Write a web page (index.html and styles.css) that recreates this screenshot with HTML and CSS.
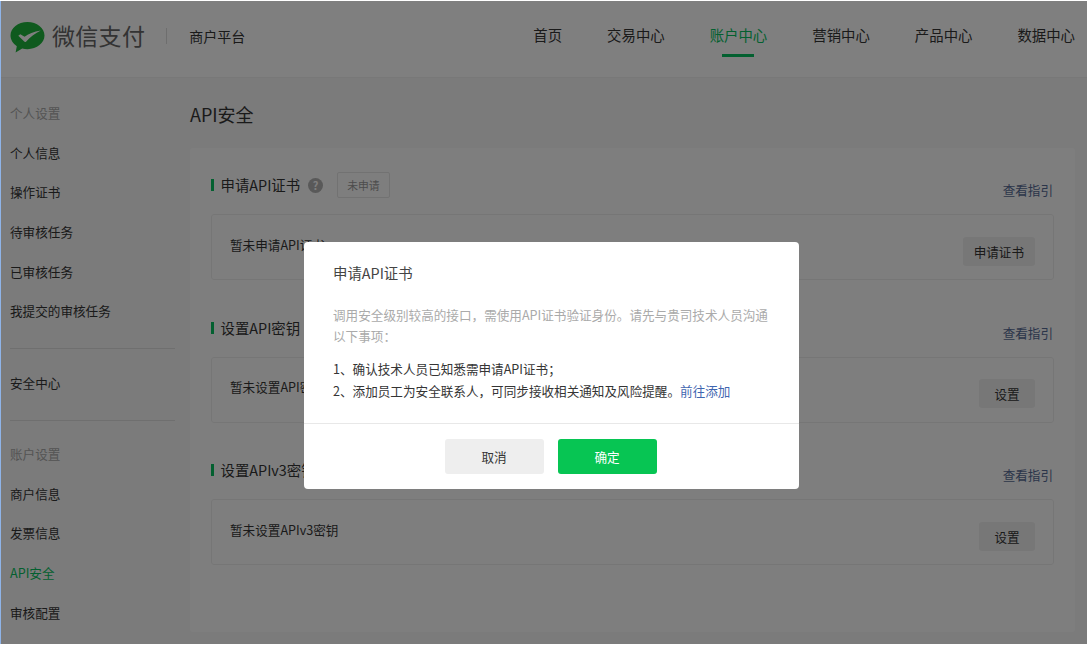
FILE: index.html
```html
<!DOCTYPE html>
<html lang="zh-CN">
<head>
  <meta charset="UTF-8" />
  <title>API安全 - 微信支付商户平台</title>
  <link rel="stylesheet" href="styles.css">
</head>
<body>
  <div class="frame">
    <div class="header">
      <div class="logo">
        <svg class="logo-icon" width="35" height="31" viewBox="0 0 35 31">
          <path fill="#1fb53c" d="M17.5 0C8 0 .5 6 .5 13.6c0 4.3 2.5 8.1 6.3 10.6L5.6 30.6l6.6-4c1.700.4 3.400.6 5.300.6 9.400 0 17-6.100 17-13.600S26.900 0 17.500 0z"/>
          <path fill="#fff" d="M8.300 13.800l2-1.600 4.300 2.500c3.600-2.900 9.300-5.300 16.200-6.300-5.400 2.700-10.400 6.300-14.800 11.300-.5.300-1 .3-1.500.1z"/>
        </svg>
        <span class="logo-text">微信支付</span>
        <span class="logo-line"></span>
        <span class="logo-sub">商户平台</span>
      </div>
      <div class="nav">
        <a class="nav-item">首页</a>
        <a class="nav-item">交易中心</a>
        <a class="nav-item active">账户中心</a>
        <a class="nav-item">营销中心</a>
        <a class="nav-item">产品中心</a>
        <a class="nav-item">数据中心</a>
      </div>
    </div>

    <div class="body">
      <div class="sidebar">
        <div class="side-group">
          <div class="side-label">个人设置</div>
          <a class="side-item">个人信息</a>
          <a class="side-item">操作证书</a>
          <a class="side-item">待审核任务</a>
          <a class="side-item">已审核任务</a>
          <a class="side-item">我提交的审核任务</a>
        </div>
        <div class="side-group">
          <a class="side-item">安全中心</a>
        </div>
        <div class="side-group">
          <div class="side-label">账户设置</div>
          <a class="side-item">商户信息</a>
          <a class="side-item">发票信息</a>
          <a class="side-item active">API安全</a>
          <a class="side-item">审核配置</a>
        </div>
      </div>

      <div class="main">
        <h1 class="page-title">API安全</h1>
        <div class="card">
          <div class="section">
            <div class="section-head">
              <h2 class="section-title">申请API证书</h2>
              <span class="help">?</span>
              <span class="tag">未申请</span>
              <a class="guide">查看指引</a>
            </div>
            <div class="box">
              <span class="box-text">暂未申请API证书</span>
              <button class="btn">申请证书</button>
            </div>
          </div>
          <div class="section">
            <div class="section-head">
              <h2 class="section-title">设置API密钥</h2>
              <a class="guide">查看指引</a>
            </div>
            <div class="box">
              <span class="box-text">暂未设置API密钥</span>
              <button class="btn">设置</button>
            </div>
          </div>
          <div class="section">
            <div class="section-head">
              <h2 class="section-title">设置APIv3密钥</h2>
              <a class="guide">查看指引</a>
            </div>
            <div class="box">
              <span class="box-text">暂未设置APIv3密钥</span>
              <button class="btn">设置</button>
            </div>
          </div>
        </div>
      </div>
    </div>

    <div class="mask"></div>

    <div class="dialog">
      <div class="dialog-body">
        <h3 class="dialog-title">申请API证书</h3>
        <p class="dialog-desc">调用安全级别较高的接口，需使用API证书验证身份。请先与贵司技术人员沟通以下事项：</p>
        <p class="dialog-list">1、确认技术人员已知悉需申请API证书；<br>2、添加员工为安全联系人，可同步接收相关通知及风险提醒。<a class="link">前往添加</a></p>
      </div>
      <div class="dialog-foot">
        <button class="dialog-btn">取消</button>
        <button class="dialog-btn primary">确定</button>
      </div>
    </div>
  </div>
</body>
</html>
```

FILE: styles.css
```css
* {
  box-sizing: border-box;
  margin: 0;
  padding: 0;
}

html, body {
  height: 100%;
  overflow: hidden;
}

body {
  background: #fff;
  padding: 1px 0 1px 0;
  font-family: "Noto Sans CJK SC", "Liberation Sans", sans-serif;
  font-size: 12.6px;
  color: #353535;
}

.frame {
  position: relative;
  height: 643px;
  overflow: hidden;
  background: #f6f6f6;
  border-left: 1px solid #8fb4e8;
}

/* header */
.header {
  display: flex;
  justify-content: space-between;
  align-items: flex-start;
  height: 77px;
  background: #fff;
  border-bottom: 1px solid #f0f0f0;
  padding: 0 12px 0 9px;
}

.logo {
  display: flex;
  align-items: center;
  height: 70px;
}

.logo-icon {
  margin-top: 3px;
}

.logo-text {
  margin: -2px 0 0 7px;
  font-size: 23px;
  letter-spacing: 0.3px;
  color: #666;
}

.logo-line {
  width: 1px;
  height: 16px;
  margin: 0 22px 0 21px;
  background: #ddd;
}

.logo-sub {
  font-size: 14px;
  color: #353535;
}

.nav {
  display: flex;
  gap: 45px;
}

.nav-item {
  position: relative;
  height: 68px;
  line-height: 68px;
  font-size: 14.4px;
  color: #353535;
}

.nav-item.active {
  color: #07c160;
}

.nav-item.active::after {
  content: "";
  position: absolute;
  left: 12px;
  right: 13px;
  bottom: 12px;
  height: 3px;
  background: #07c160;
}

/* layout */
.body {
  display: flex;
  height: 565px;
}

.sidebar {
  width: 189px;
  flex-shrink: 0;
  padding: 15px 15px 0 9px;
}

.side-group {
  padding-bottom: 17px;
  margin-bottom: 14px;
  border-bottom: 1px solid #dedede;
}

.side-group + .side-group {
  margin-bottom: 13px;
}

.side-group:last-child {
  border-bottom: 0;
}

.side-label,
.side-item {
  display: block;
  height: 39.7px;
  line-height: 39.7px;
}

.side-label {
  color: #a8a8a8;
}

.side-item.active {
  color: #07c160;
}

.main {
  flex: 1;
  padding: 0 12px 0 0;
}

.page-title {
  height: 70px;
  line-height: 72px;
  font-size: 18px;
  font-weight: 400;
}

.card {
  height: 484px;
  padding: 22px 21px 0;
  background: #fdfdfd;
  border-radius: 3px;
}

.section {
  margin-bottom: 32.5px;
}

.section-head {
  display: flex;
  align-items: flex-start;
  height: 44px;
  padding-top: 4px;
}

.section-title {
  position: relative;
  padding-left: 9.5px;
  line-height: 22px;
  font-size: 14.4px;
  font-weight: 400;
}

.section-title::before {
  content: "";
  position: absolute;
  left: 0;
  top: 5px;
  width: 3px;
  height: 12px;
  background: #07c160;
}

.help {
  width: 15px;
  height: 15px;
  margin: 4px 0 0 8px;
  border-radius: 50%;
  background: #b2b2b2;
  color: #fff;
  font-size: 11px;
  font-weight: 700;
  line-height: 15px;
  text-align: center;
}

.tag {
  height: 26px;
  margin: -2px 0 0 14px;
  padding: 0 9px;
  border: 1px solid #e5e5e5;
  border-radius: 2px;
  color: #999;
  font-size: 10.8px;
  line-height: 24px;
}

.guide {
  margin: 5px 1px 0 auto;
  line-height: 22px;
  color: #576b95;
}

.box {
  display: flex;
  justify-content: space-between;
  align-items: center;
  height: 66px;
  padding: 0 18px;
  border: 1px solid #ededed;
  border-radius: 3px;
}

.box-text {
  margin-bottom: 6px;
}

.btn {
  height: 29px;
  min-width: 56px;
  margin-top: 8px;
  padding: 0 11px;
  border: 0;
  border-radius: 3px;
  background: #efefef;
  color: #353535;
  font: inherit;
}

/* dialog */
.mask {
  position: absolute;
  inset: 0;
  background: rgba(0, 0, 0, 0.5);
}

.dialog {
  position: absolute;
  left: 303px;
  top: 241px;
  width: 495px;
  height: 247px;
  background: #fff;
  border-radius: 4px;
}

.dialog-body {
  height: 182px;
  padding: 20px 29px 0;
  border-bottom: 1px solid #e8e8e8;
}

.dialog-title {
  font-size: 14.4px;
  font-weight: 400;
  line-height: 22px;
  color: #444;
}

.dialog-desc {
  margin-top: 20px;
  line-height: 21px;
  color: #aaa;
}

.dialog-list {
  margin-top: 12px;
  line-height: 21.5px;
  color: #353535;
}

.link {
  color: #3f66b0;
}

.dialog-foot {
  display: flex;
  justify-content: center;
  gap: 14px;
  padding: 15px 2px 0 0;
}

.dialog-btn {
  width: 99px;
  height: 35px;
  border: 0;
  border-radius: 3px;
  background: #eee;
  color: #353535;
  font: inherit;
}

.dialog-btn.primary {
  background: #07c553;
  color: #fff;
}
```
